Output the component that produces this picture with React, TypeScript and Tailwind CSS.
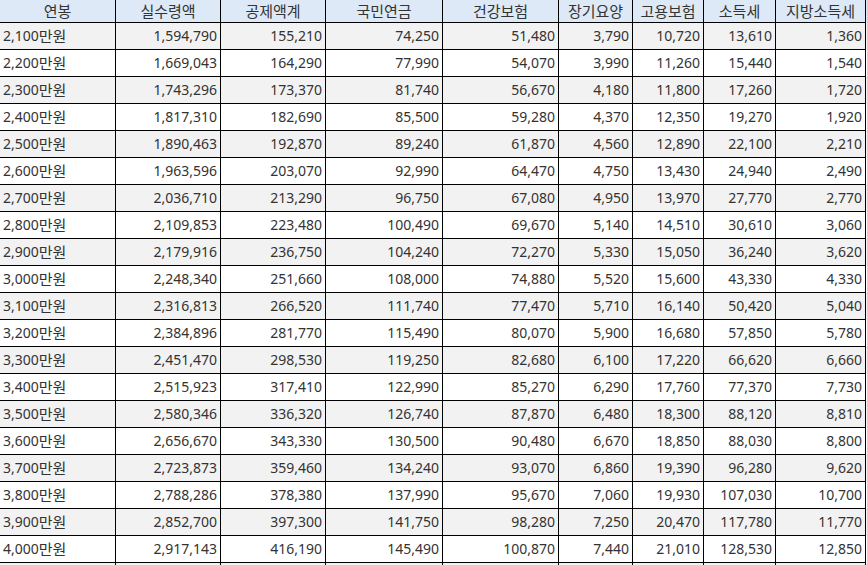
import React from "react";

const widths = ["w-[116px]", "w-[105px]", "w-[105px]", "w-[117px]", "w-[116px]", "w-[74px]", "w-[71px]", "w-[72px]", "w-[90px]"];
const headers = ["연봉", "실수령액", "공제액계", "국민연금", "건강보험", "장기요양", "고용보험", "소득세", "지방소득세"];

const rows: string[][] = [
  ["2,100", "1,594,790", "155,210", "74,250", "51,480", "3,790", "10,720", "13,610", "1,360"],
  ["2,200", "1,669,043", "164,290", "77,990", "54,070", "3,990", "11,260", "15,440", "1,540"],
  ["2,300", "1,743,296", "173,370", "81,740", "56,670", "4,180", "11,800", "17,260", "1,720"],
  ["2,400", "1,817,310", "182,690", "85,500", "59,280", "4,370", "12,350", "19,270", "1,920"],
  ["2,500", "1,890,463", "192,870", "89,240", "61,870", "4,560", "12,890", "22,100", "2,210"],
  ["2,600", "1,963,596", "203,070", "92,990", "64,470", "4,750", "13,430", "24,940", "2,490"],
  ["2,700", "2,036,710", "213,290", "96,750", "67,080", "4,950", "13,970", "27,770", "2,770"],
  ["2,800", "2,109,853", "223,480", "100,490", "69,670", "5,140", "14,510", "30,610", "3,060"],
  ["2,900", "2,179,916", "236,750", "104,240", "72,270", "5,330", "15,050", "36,240", "3,620"],
  ["3,000", "2,248,340", "251,660", "108,000", "74,880", "5,520", "15,600", "43,330", "4,330"],
  ["3,100", "2,316,813", "266,520", "111,740", "77,470", "5,710", "16,140", "50,420", "5,040"],
  ["3,200", "2,384,896", "281,770", "115,490", "80,070", "5,900", "16,680", "57,850", "5,780"],
  ["3,300", "2,451,470", "298,530", "119,250", "82,680", "6,100", "17,220", "66,620", "6,660"],
  ["3,400", "2,515,923", "317,410", "122,990", "85,270", "6,290", "17,760", "77,370", "7,730"],
  ["3,500", "2,580,346", "336,320", "126,740", "87,870", "6,480", "18,300", "88,120", "8,810"],
  ["3,600", "2,656,670", "343,330", "130,500", "90,480", "6,670", "18,850", "88,030", "8,800"],
  ["3,700", "2,723,873", "359,460", "134,240", "93,070", "6,860", "19,390", "96,280", "9,620"],
  ["3,800", "2,788,286", "378,380", "137,990", "95,670", "7,060", "19,930", "107,030", "10,700"],
  ["3,900", "2,852,700", "397,300", "141,750", "98,280", "7,250", "20,470", "117,780", "11,770"],
  ["4,000", "2,917,143", "416,190", "145,490", "100,870", "7,440", "21,010", "128,530", "12,850"],
  ["", "", "", "", "", "", "", "", ""],
];

export default function App() {
  return (
    <div className="w-[867px] h-[565px] overflow-hidden bg-white text-[#333333] text-[14px] font-['Noto_Sans','Noto_Sans_CJK_KR',sans-serif]">
      <div className="flex h-[23px] bg-[#dde9f6]">
        {headers.map((h, i) => (
          <div
            key={i}
            className={`${widths[i]} shrink-0 border-r border-b border-black flex items-center justify-center leading-none text-[15px]`}
          >
            {h}
          </div>
        ))}
      </div>
      {rows.map((r, ri) => (
        <div key={ri} className={`flex h-[27px] ${ri % 2 === 0 ? "bg-[#f2f2f2]" : "bg-white"}`}>
          {r.map((c, ci) => (
            <div
              key={ci}
              className={`${widths[ci]} shrink-0 border-r border-b border-black flex items-center leading-none ${
                ci === 0 ? "justify-start pl-[3px]" : "justify-end pr-[3px]"
              }`}
            >
              {ci === 0 && c !== "" ? (
                <>
                  {c}
                  <span className="text-[15px]">만원</span>
                </>
              ) : (
                c
              )}
            </div>
          ))}
        </div>
      ))}
    </div>
  );
}
